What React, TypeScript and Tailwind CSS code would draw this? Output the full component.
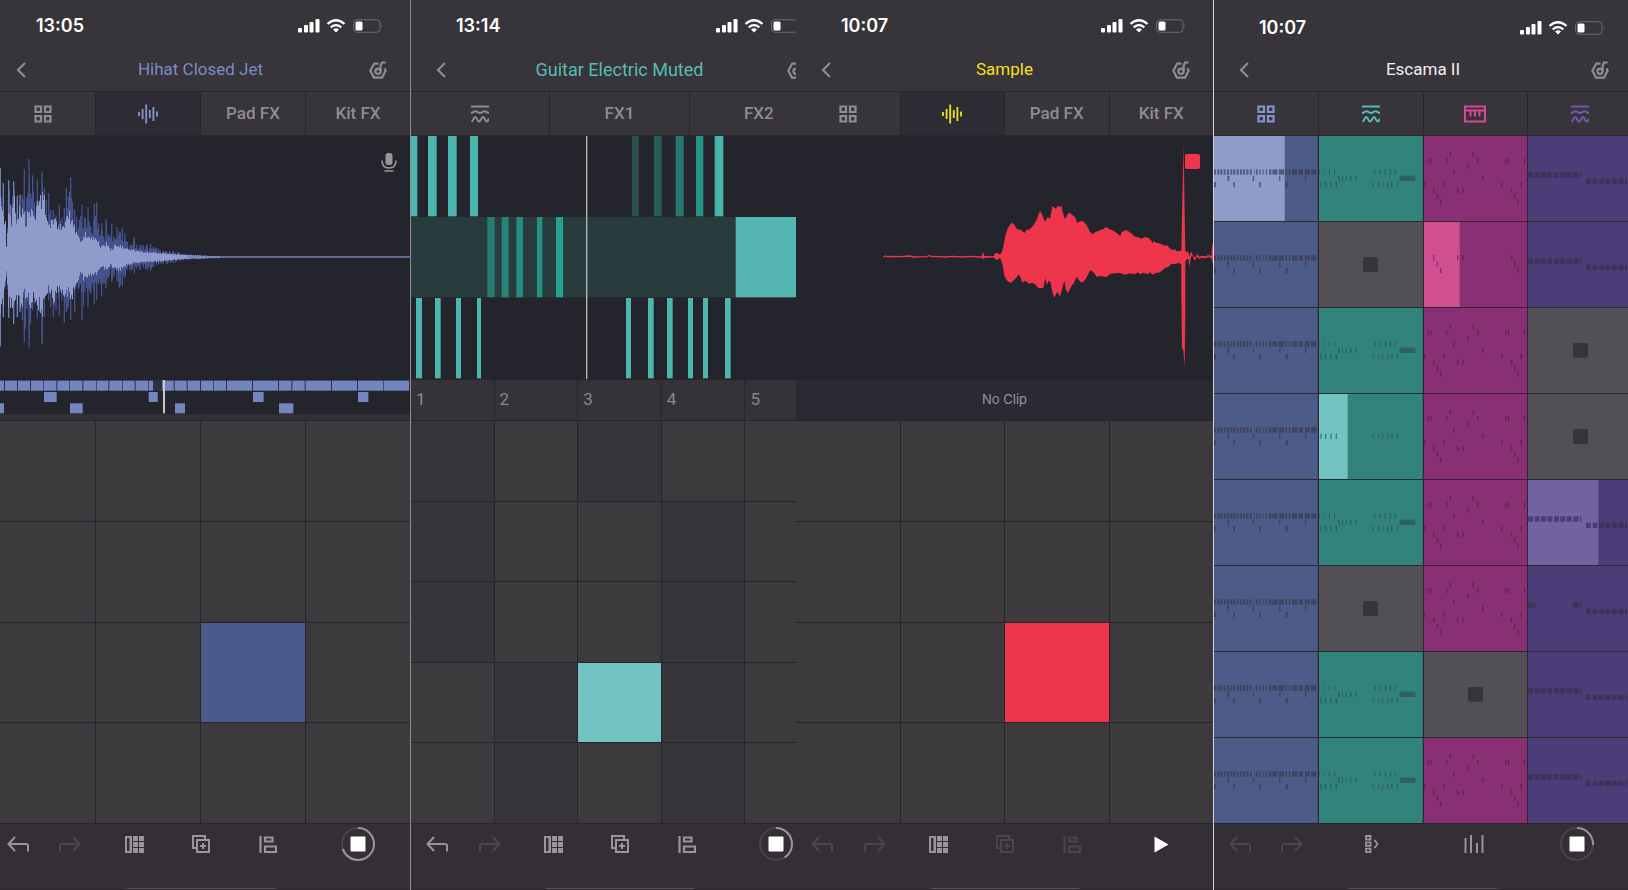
import type { ReactNode } from "react";
import clsx from "clsx";

type Bar = [start: number, end: number];

// ---------------------------------------------------------------- icons

const ICON = "fill-none stroke-current";

function BackIcon() {
  return (
    <svg viewBox="0 0 10 16" className={clsx(ICON, "h-4 w-[10px]")} strokeWidth={2.2}>
      <path d="M9 1 2 8l7 7" />
    </svg>
  );
}

function TunerIcon() {
  return (
    <svg viewBox="0 0 18 18" className={clsx(ICON, "size-[18px]")} strokeWidth={2.2}>
      <path d="M9.5 2.6H5.2L1.4 9.8l3.5 6.8h8.2l3.5-6.8-1-2.4" />
      <circle cx="9" cy="10.3" r="2.6" />
      <path d="M11.6 10.3V4.8L13 1.5h3.6" />
    </svg>
  );
}

function PadsIcon() {
  return (
    <svg viewBox="0 0 18 18" className={clsx(ICON, "size-[18px]")} strokeWidth={2.2}>
      <path d="M1.5 1.5H7V7H1.5zM11 1.5h5.5V7H11zM1.5 11H7v5.5H1.5zM11 11h5.5v5.5H11z" />
    </svg>
  );
}

function WaveIcon() {
  return (
    <svg viewBox="0 0 20 20" className={clsx(ICON, "size-5")} strokeWidth={1.8}>
      <path d="M1 8v4M4.6 5v10M8.2 .5v19M11.8 6v8M15.4 3v14M19 7.5v5" />
    </svg>
  );
}

function SynthIcon() {
  return (
    <svg viewBox="0 0 18 18" className={clsx(ICON, "size-[18px]")} strokeWidth={2}>
      <path d="M0 1.5h18" />
      <path d="M0 8C2 8 2.5 6.3 4.5 6.300S7 8 9 8s2.500-1.700 4.500-1.700S16 8 18 8" />
      <path d="M.5 16.500C2.500 16 2.500 12 4.300 12S6 16.500 8 16.500 10.300 12 12 12s2 4.500 3.500 4.500S17 15.500 17.700 13.500" />
    </svg>
  );
}

function KeysIcon() {
  return (
    <svg viewBox="0 0 22 18" className={clsx(ICON, "h-[18px] w-[22px]")} strokeWidth={2}>
      <path d="M1 1.5h20v15H1zM1 5.5h20M6.5 6v5.5M11 6v5.5M15.5 6v5.5" />
    </svg>
  );
}

function UndoIcon({ flip = false }: { flip?: boolean }) {
  return (
    <svg viewBox="0 0 22 16" className={clsx(ICON, "h-4 w-[22px]", flip && "-scale-x-100")} strokeWidth={2}>
      <path d="M8 1 1.5 8 8 15M1.5 8H19q2 0 2 2v5.5" />
    </svg>
  );
}

function KitIcon() {
  return (
    <svg viewBox="0 0 19 17" className="h-[17px] w-[19px] fill-current">
      <path d="M0 0h7v17H0zM2 2v13h2.5V2z" fillRule="evenodd" />
      {[0, 6, 12].map((y) => (
        <path key={y} d={`M8 ${y}h5v5h-5zM14 ${y}h5v5h-5z`} />
      ))}
    </svg>
  );
}

function DuplicateIcon() {
  return (
    <svg viewBox="0 0 18 18" className={clsx(ICON, "size-[18px]")} strokeWidth={2}>
      <path d="M5 13H1V1h12v4" />
      <path d="M5 5h12v12H5zM11 8v6M8 11h6" />
    </svg>
  );
}

function QuantizeIcon() {
  return (
    <svg viewBox="0 0 18 17" className={clsx(ICON, "h-[17px] w-[18px]")} strokeWidth={2.2}>
      <path d="M1.5 0v17M6 1.5h7.5v4H6zM6 10.5h11V16H6z" />
    </svg>
  );
}

function ScenesIcon() {
  return (
    <svg viewBox="0 0 14 18" className={clsx(ICON, "h-[18px] w-[14px]")} strokeWidth={1.8}>
      <path d="M1 1h4.5v3.5H1zM1 7.3h4.5v3.5H1zM1 13.6h4.5v3.5H1zM9.5 5l3 4-3 4" />
    </svg>
  );
}

function MixerIcon() {
  return (
    <svg viewBox="0 0 20 18" className={clsx(ICON, "h-[18px] w-5")} strokeWidth={2}>
      <path d="M1.5 3v15M7 0v18M13 8v10M18.5 0v18" />
    </svg>
  );
}

function PlayIcon() {
  return (
    <svg viewBox="0 0 15 17" className="h-[17px] w-[15px] fill-current text-white">
      <path d="M.5.5 14.5 8.5.5 16.5z" />
    </svg>
  );
}

function StopIcon({ progress }: { progress: number }) {
  return (
    <svg viewBox="0 0 34 34" className={clsx(ICON, "size-[34px]")} strokeWidth={2}>
      <circle cx="17" cy="17" r="16" className="stroke-[#4d4b50]" strokeWidth={1.5} />
      <circle
        cx="17"
        cy="17"
        r="16"
        pathLength={100}
        strokeDasharray={`${progress} 100`}
        transform="rotate(-90 17 17)"
        className="stroke-[#98969a]"
      />
      <rect x="9.5" y="9.5" width="15" height="15" rx="1" className="fill-white stroke-none" />
    </svg>
  );
}

function MicIcon() {
  return (
    <svg viewBox="0 0 16 19" className={clsx(ICON, "h-[19px] w-4")} strokeWidth={1.6}>
      <rect x="4.5" y="0" width="7" height="12" rx="2.5" className="fill-current stroke-none" />
      <path d="M1 7.5C1 12.5 3.5 15 8 15s7-2.5 7-7.5M3.5 18h9" />
    </svg>
  );
}

function StatusIcons() {
  return (
    <svg viewBox="0 0 86 14" className="h-[14px] w-[86px] fill-white">
      <rect x="0" y="9" width="4" height="4.5" rx="1" />
      <rect x="6" y="6" width="4" height="7.5" rx="1" />
      <rect x="11.5" y="3" width="4" height="10.5" rx="1" />
      <rect x="17.5" y="0" width="4" height="13.5" rx="1" />
      <g className="fill-none stroke-white" strokeWidth={2.3}>
        <path d="M29.5 5Q38-2.5 46.5 5" />
        <path d="M32.7 8.3Q38 4 43.3 8.3" />
      </g>
      <path d="M35 10.5q3-2.5 6 0l-3 3z" />
      <rect x="55.5" y=".75" width="26.5" height="12.5" rx="3.5" className="fill-none stroke-[#6e6c70]" />
      <rect x="57.5" y="2.5" width="7" height="9" rx="1.5" />
      <path d="M83.5 5q1.5 2 0 4z" className="fill-[#6e6c70]" />
    </svg>
  );
}

// ---------------------------------------------------------------- shared chrome

type ScreenProps = {
  time: string;
  title: string;
  titleClass: string;
  className?: string;
  innerClass?: string;
  lowStatus?: boolean;
  tabs: ReactNode;
  toolbar: ReactNode;
  children: ReactNode;
};

function Screen({ time, title, titleClass, className, innerClass, lowStatus, tabs, toolbar, children }: ScreenProps) {
  return (
    <section className={clsx("flex overflow-hidden bg-[#37343a]", className)}>
      <div className={clsx("flex w-full shrink-0 flex-col", innerClass)}>
        <div className={clsx("flex h-[50px] items-center justify-between pr-[26px] pl-[45px]", lowStatus ? "pt-[6px]" : "pt-[2px]")}>
          <span className="text-lg font-semibold text-white">{time}</span>
          <StatusIcons />
        </div>
        <header className="flex h-[41px] items-center justify-between pr-[23px] pb-[2px] pl-[25px] text-[#8f8d90]">
          <button type="button" aria-label="Back" className="w-4">
            <BackIcon />
          </button>
          <h1 className={clsx("font-[Roboto,sans-serif]", titleClass)}>{title}</h1>
          <button type="button" aria-label="Tuning">
            <TunerIcon />
          </button>
        </header>
        <nav className="flex h-[45px] gap-px border-y border-[#28262c] bg-[#28262c]">{tabs}</nav>
        {children}
        <footer className="flex h-[67px] flex-col justify-between border-t border-[#28262c] bg-[#332f35]">
          {toolbar}
          <div className="flex justify-center border-b border-[#33262d]">
            <div className="h-px w-[148px] bg-[#575357]" />
          </div>
        </footer>
      </div>
    </section>
  );
}

type TabProps = { active?: boolean; className?: string; label: string; children?: ReactNode };

function Tab({ active, className, label, children }: TabProps) {
  return (
    <button
      type="button"
      aria-label={label}
      className={clsx(
        "flex flex-1 items-center justify-center font-[Roboto,sans-serif] text-[17px] font-medium",
        active ? "bg-[#2d2b34]" : "bg-[#37343a]",
        className ?? "text-[#8f8d90]",
      )}
    >
      {children ?? label}
    </button>
  );
}

type ToolProps = { label: string; dim?: boolean; children: ReactNode };

function Tool({ label, dim, children }: ToolProps) {
  return (
    <button
      type="button"
      aria-label={label}
      disabled={dim}
      className={clsx("flex items-center justify-center", dim ? "text-[#4a474c]" : "text-[#98969a]")}
    >
      {children}
    </button>
  );
}

type EditToolbarProps = { canUndo?: boolean; canEdit?: boolean; transport: ReactNode };

function EditToolbar({ canUndo = true, canEdit = true, transport }: EditToolbarProps) {
  return (
    <div className="grid h-10 grid-cols-[53fr_52fr_76fr_58fr_76fr_104fr]">
      <Tool label="Undo" dim={!canUndo}>
        <UndoIcon />
      </Tool>
      <Tool label="Redo" dim>
        <UndoIcon flip />
      </Tool>
      <Tool label="Layout">
        <KitIcon />
      </Tool>
      <Tool label="Duplicate" dim={!canEdit}>
        <DuplicateIcon />
      </Tool>
      <Tool label="Quantize" dim={!canEdit}>
        <QuantizeIcon />
      </Tool>
      <Tool label="Transport">{transport}</Tool>
    </div>
  );
}

function PadTabs({ color }: { color: string }) {
  return (
    <>
      <Tab label="Pads">
        <PadsIcon />
      </Tab>
      <Tab label="Sample" active className={color}>
        <WaveIcon />
      </Tab>
      <Tab label="Pad FX" />
      <Tab label="Kit FX" />
    </>
  );
}

function PadGrid({ color }: { color: string }) {
  return (
    <div className="grid min-h-0 flex-1 grid-cols-4 grid-rows-4 gap-px border-t border-[#26252b] bg-[#26252b]">
      {Array.from({ length: 16 }, (_, i) => (
        <button key={i} type="button" aria-label={`Pad ${i + 1}`} className={i === 10 ? color : "bg-[#3c3a3d]"} />
      ))}
    </div>
  );
}

// ---------------------------------------------------------------- drum pad screen

// envelopes as [x, height above the axis, height below the axis], three units to a pixel
const INNER: number[][] = [
  [0, 190, 230], [8, 190, 165], [15, 110, 80], [17, 30, 40], [20, 60, 60], [24, 145, 165], [34, 120, 150], [40, 215, 195],
  [48, 140, 160], [60, 180, 165], [75, 125, 130], [90, 165, 160], [102, 125, 125], [112, 175, 170], [124, 215, 185],
  [134, 180, 160], [145, 120, 120], [160, 140, 155], [170, 115, 130], [180, 120, 125], [190, 115, 150], [199, 150, 120],
  [207, 140, 120], [214, 120, 145], [225, 100, 110], [232, 85, 80], [240, 50, 65], [250, 85, 75], [262, 70, 70],
  [275, 70, 65], [290, 65, 60], [300, 35, 34], [320, 48, 42], [330, 24, 30], [345, 42, 42], [360, 38, 44], [378, 28, 28],
  [400, 24, 22], [430, 18, 18], [470, 14, 15], [500, 12, 12], [540, 8, 8], [600, 5, 5], [640, 3, 4], [700, 2, 2], [1260, 1, 1],
];

const SPIKES: number[][] = [
  [1, 268, 268], [10, 222, 180], [18, 30, 60], [26, 230, 182], [32, 157, 150], [41, 227, 202], [52, 184, 180], [60, 187, 165],
  [67, 187, 190], [73, 264, 255], [80, 177, 155], [87, 294, 272], [92, 190, 180], [98, 245, 160], [105, 132, 130], [112, 232, 185],
  [118, 172, 165], [126, 257, 262], [133, 202, 180], [139, 172, 115], [146, 192, 130], [152, 142, 150], [160, 142, 180],
  [168, 127, 160], [178, 157, 175], [186, 117, 130], [193, 147, 197], [199, 207, 165], [205, 182, 150], [212, 240, 188],
  [218, 144, 110], [224, 142, 165], [230, 120, 90], [246, 157, 190], [254, 120, 105], [264, 150, 150], [272, 92, 110],
  [283, 160, 142], [290, 164, 130], [296, 97, 80], [305, 102, 118], [311, 62, 80], [318, 114, 92], [325, 70, 62],
  [335, 100, 75], [342, 60, 60], [351, 89, 72], [358, 77, 92], [367, 89, 88], [374, 72, 62], [380, 47, 40], [390, 37, 40],
  [403, 60, 50], [410, 37, 35], [420, 37, 40], [430, 35, 32], [440, 37, 40], [452, 39, 42], [460, 30, 30], [470, 27, 25],
  [480, 20, 22], [500, 17, 20], [520, 18, 18], [540, 12, 12], [560, 9, 8], [600, 6, 6], [640, 4, 4],
];

function sampleAt(table: number[][], x: number, col: number) {
  const i = table.findIndex((row) => row[0] >= x);
  if (i < 1) return table[i === 0 ? 0 : table.length - 1][col];
  const a = table[i - 1];
  const b = table[i];
  return a[col] + ((x - a[0]) / (b[0] - a[0])) * (b[col] - a[col]);
}

const jitter = (n: number) => Math.abs(Math.sin(n * 12.9898) * 43758.5453) % 1;

function wavePath(table: number[][], lo: number) {
  let d = "";
  for (let x = 0; x < 660; x += 3) {
    const up = sampleAt(table, x, 1) * (lo + (1 - lo) * jitter(x + 1));
    const down = sampleAt(table, x, 2) * (lo + (1 - lo) * jitter(x + 7));
    d += `M${x} ${(363 - up).toFixed(0)}h3V${(363 + down).toFixed(0)}h-3z`;
  }
  return d;
}

const INNER_PATH = wavePath(INNER, 0.68);
const OUTER_PATH = wavePath(SPIKES, 0.5);

function HihatWave() {
  return (
    <div className="relative h-[244px] bg-[#24252c]">
      <svg viewBox="-27 0 1257 732" preserveAspectRatio="none" className="size-full">
        <path d={OUTER_PATH} fill="#46538a" />
        {SPIKES.map(([x, up, down]) => (
          <path key={x} d={`M${x - 2} ${363 - up}h4V${363 + down}h-4z`} fill={x < 66 ? "#6f80b9" : "#43508a"} />
        ))}
        <path d={INNER_PATH} fill="#8f9bcb" />
        <path d="M560 363H1233" stroke="#7482b8" strokeWidth={4} />
      </svg>
      <div className="absolute top-[17px] right-[13px] text-[#98969a]">
        <MicIcon />
      </div>
    </div>
  );
}

const HIHAT_LANES: Bar[][] = [
  [
    [-27, 12], [15, 51], [54, 90], [93, 130], [132, 169], [172, 208], [210, 247], [250, 288], [290, 325], [328, 366],
    [368, 404], [407, 444], [446, 459], [486, 521], [524, 560], [563, 600], [603, 639], [641, 678], [681, 756],
    [759, 834], [837, 874], [877, 914], [917, 993], [996, 1071], [1074, 1149], [1151, 1227],
  ],
  [[132, 170], [446, 473], [759, 791], [1074, 1105]],
  [[-27, 12], [210, 248], [525, 555], [837, 880]],
];

function HihatClip() {
  return (
    <div className="h-10 border-b-[6px] border-[#332f35] bg-[#24252c]">
      <svg viewBox="-27 0 1257 102" preserveAspectRatio="none" className="size-full">
        <rect x={-27} y={0} width={1260} height={33} fill="#2e2f45" />
        {HIHAT_LANES.map((lane, row) =>
          lane.map(([a, b]) => <rect key={`${row}-${a}`} x={a} y={2 + row * 34} width={b - a} height={30} fill="#7486bf" />),
        )}
        <rect x={489} y={0} width={6} height={100} fill="#c9c7c6" />
      </svg>
    </div>
  );
}

// ---------------------------------------------------------------- guitar screen

type Note = [row: number, start: number, end: number, color: string];

const TEAL = "#4db6ae";

const GUITAR_NOTES: Note[] = [
  [0, 0, 22, TEAL], [0, 54, 80, TEAL], [0, 114, 140, TEAL], [0, 180, 204, TEAL],
  [0, 666, 686, "#2a514e"], [0, 732, 755, "#275b57"], [0, 797, 821, "#28776f"], [0, 858, 880, "#269486"], [0, 914, 940, "#46b3aa"],
  [1, 0, 1260, "#283b3d"], [1, 232, 254, "#277c74"], [1, 275, 296, "#268377"], [1, 319, 339, "#248c80"],
  [1, 381, 397, "#269083"], [1, 438, 459, "#25a194"], [1, 977, 1260, "#55b6b1"],
  [2, 18, 36, TEAL], [2, 75, 92, TEAL], [2, 138, 153, TEAL], [2, 201, 213, TEAL], [2, 648, 663, TEAL], [2, 714, 731, TEAL],
  [2, 771, 788, TEAL], [2, 834, 849, TEAL], [2, 879, 894, TEAL], [2, 945, 962, TEAL],
];

function GuitarRoll() {
  return (
    <div className="h-[244px] bg-[#24252c]">
      <svg viewBox="3 0 1251 732" preserveAspectRatio="none" className="size-full">
        {GUITAR_NOTES.map(([row, a, b, color]) => (
          <rect key={`${row}-${a}`} x={a} y={row * 243} width={b - a} height={241} fill={color} />
        ))}
        <rect x={528} y={0} width={4} height={729} fill="#b9b7b8" />
      </svg>
    </div>
  );
}

// the black keys of a chromatic layout, five semitones to a row from the bottom up
const BLACK_KEYS = [0, 2, 5, 8, 10, 13, 16, 18, 21, 23];

function NoteGrid() {
  return (
    <>
      <div className="grid h-10 grid-cols-5 gap-px bg-[#28272d]">
        {[1, 2, 3, 4, 5].map((n) => (
          <span key={n} className="flex items-center bg-[#353239] pl-[5px] font-[Roboto,sans-serif] text-[17px] text-[#8a888b]">
            {n}
          </span>
        ))}
      </div>
      <div className="grid min-h-0 flex-1 grid-cols-5 grid-rows-5 gap-px border-t border-[#26252b] bg-[#26252b]">
        {Array.from({ length: 25 }, (_, i) => (
          <button
            key={i}
            type="button"
            aria-label={`Note ${i + 1}`}
            className={i === 17 ? "bg-[#70c3c1]" : BLACK_KEYS.includes(i) ? "bg-[#37343a]" : "bg-[#3c3a3d]"}
          />
        ))}
      </div>
    </>
  );
}

// ---------------------------------------------------------------- sample screen

const VOICE_TOP =
  "335,380 338,366 341,372 345,380 371,380 374,371 380,368 387,373 392,372 397,362 402,340 406,316 412,298 420,284 427,278 " +
  "433,284 441,298 452,299 463,309 470,300 480,298 490,286 500,270 506,252 511,243 517,256 525,275 533,261 540,267 547,228 " +
  "557,236 563,229 567,228 570,232 574,226 579,250 585,268 590,258 594,250 601,250 615,262 622,279 630,274 640,274 650,286 " +
  "660,305 667,313 675,307 690,301 700,297 708,290 716,296 730,302 740,309 751,319 755,306 768,300 780,307 795,320 805,322 " +
  "815,326 824,321 836,324 845,334 848,341 851,332 857,338 868,340 885,347 892,346 900,356 910,361 915,357 920,364 934,362 " +
  "936,250 941,45 944,250 946,360 950,368 954,362 958,380 961,370 964,365 970,378 976,383 981,372 988,380 996,377 1006,379 " +
  "1016,375 1024,379 1026,350 1029,335 1040,335";

const VOICE_BOTTOM =
  "1040,405 1028,400 1024,384 1016,381 1006,385 996,383 988,386 981,380 974,392 966,374 962,386 958,410 955,386 950,388 " +
  "946,395 946,550 944,710 940,660 936,655 934,500 934,402 925,399 915,402 905,401 895,411 885,414 870,427 855,430 848,434 " +
  "840,426 835,433 820,428 810,433 804,427 795,433 780,430 765,434 750,429 735,430 720,432 708,442 695,438 680,440 672,428 " +
  "662,420 655,432 645,450 636,458 628,452 620,440 612,458 603,470 594,489 588,480 583,452 578,470 570,500 563,486 558,492 " +
  "553,504 547,485 541,455 536,452 531,464 526,445 520,474 505,474 495,462 485,458 478,461 465,452 457,459 451,440 446,434 " +
  "435,448 422,459 412,453 403,438 399,410 393,388 387,385 380,391 374,385 371,382 345,383 339,388 335,382";

function SampleWave() {
  return (
    <div className="relative h-[244px] bg-[#24252c]">
      <svg viewBox="-222 18 1251 732" preserveAspectRatio="none" className="size-full">
        <path
          d="M40 381l6-3 8 3 8-2 30 1 28-2 10 3 40-1 8-3 8 3 10-1 30 2 20-2 30 2 30-2 20 2 38-1h14"
          className="fill-none stroke-[#ee354b]"
          strokeWidth={4}
        />
        <polygon points={`${VOICE_TOP} ${VOICE_BOTTOM}`} fill="#ee354b" />
      </svg>
      <button
        type="button"
        aria-label="Stop recording"
        className="absolute top-[18px] right-[13px] size-[15px] rounded-[2px] bg-[#ee354b]"
      />
    </div>
  );
}

// ---------------------------------------------------------------- session screen

type Mark = [x: number, y: number, w: number];
type Track = { name: string; base: string; lit: string; note: string; color: string; icon: ReactNode; marks: Mark[] };
type Clip = { marks?: Mark[]; progress?: number } | null;

const row = (y: number, bars: Bar[]): Mark[] => bars.map(([a, b]) => [a, y, b - a]);

const TICKS: Bar[] = Array.from({ length: 12 }, (_, i) => [Math.round(i * 9.7), Math.round(i * 9.7) + 6]);

const DRUM_MARKS: Mark[] = [
  ...row(100, TICKS),
  ...row(100, [
    [120, 122], [126, 131], [136, 140], [146, 149], [155, 159], [165, 172], [175, 190], [194, 210], [214, 219], [224, 229],
    [234, 249], [254, 267], [272, 287], [291, 307],
  ]),
  ...row(119, [[40, 46], [116, 120], [195, 199], [272, 277]]),
  ...row(138, [[0, 6], [58, 63], [136, 141], [214, 221]]),
];

const GUITAR_LOW: Bar[] = [[4, 8], [18, 22], [34, 38], [50, 54], [160, 163], [177, 180], [190, 193], [204, 208], [216, 220], [234, 237]];

const GUITAR_MARKS: Mark[] = [
  ...row(100, [[0, 2], [15, 17], [29, 32], [45, 48], [165, 169], [181, 185], [197, 201], [212, 216], [227, 230]]),
  ...row(119, [[57, 62], [69, 72], [80, 83], [93, 97], [108, 112], [242, 289]]),
  ...row(138, GUITAR_LOW),
];

const dots = (y: number, xs: number[]): Mark[] => xs.map((x) => [x, y, 4]);

const KEYS_MARKS: Mark[] = [
  ...dots(48, [77, 145]),
  ...dots(66, [10, 19, 67, 159, 243, 251, 300]),
  ...dots(83, [131]),
  ...dots(101, [87]),
  ...dots(119, [174]),
  ...dots(138, [0, 58, 231, 289]),
  ...dots(155, [27, 99, 115, 260]),
  ...dots(173, [38, 270]),
  ...dots(190, [48, 280]),
];

const KEYS_SHORT: Mark[] = [...dots(99, [27, 99, 115, 260]), ...dots(118, [38, 270]), ...dots(137, [48, 280])];

const BASS_LOW: Bar[] = [[174, 188], [194, 208], [213, 227], [232, 247], [252, 266], [271, 286], [291, 297]];

const BASS_MARKS: Mark[] = [
  ...row(109, [[0, 15], [20, 35], [39, 54], [58, 73], [78, 93], [97, 112], [116, 131], [136, 151], [155, 160]]),
  ...row(128, BASS_LOW),
];

const BASS_SHORT: Mark[] = [...row(109, [[0, 15], [18, 23], [134, 151], [155, 160]]), ...row(128, BASS_LOW)];

const TRACKS: Track[] = [
  { name: "Drums", base: "#4d5b88", lit: "#8f9cca", note: "#3e4460", color: "text-[#8594d0]", icon: <PadsIcon />, marks: DRUM_MARKS },
  { name: "Guitar", base: "#31837b", lit: "#73c3c2", note: "#2f625d", color: "text-[#55bdb5]", icon: <SynthIcon />, marks: GUITAR_MARKS },
  { name: "Keys", base: "#883073", lit: "#cf4f91", note: "#5c2a57", color: "text-[#d8489a]", icon: <KeysIcon />, marks: KEYS_MARKS },
  { name: "Bass", base: "#4b3e78", lit: "#7063a0", note: "#3b3358", color: "text-[#6f5bb0]", icon: <SynthIcon />, marks: BASS_MARKS },
];

const SCENES: Clip[][] = [
  [{ progress: 212 }, {}, {}, {}],
  [{}, null, { marks: KEYS_SHORT, progress: 107 }, {}],
  [{}, {}, {}, null],
  [{}, { marks: row(119, GUITAR_LOW), progress: 86 }, {}, null],
  [{}, {}, {}, { progress: 211 }],
  [{}, null, {}, { marks: BASS_SHORT }],
  [{}, {}, null, {}],
  [{}, {}, {}, {}],
];

function ClipCell({ clip, track, scene }: { clip: Clip; track: Track; scene: number }) {
  const label = `${track.name} ${scene + 1}`;
  if (!clip) {
    return (
      <button type="button" aria-label={label} className="flex items-center justify-center bg-[#525054]">
        <span className="size-[15px] rounded-[2px] bg-[#37343a]" />
      </button>
    );
  }
  const progress = clip.progress ?? 0;
  return (
    <button type="button" aria-label={label} className="min-h-0">
      <svg viewBox="0 0 311 255" preserveAspectRatio="none" className="block size-full">
        <rect width={311} height={255} fill={track.base} />
        <rect width={progress} height={255} fill={track.lit} />
        {(clip.marks ?? track.marks).map(([x, y, w]) => (
          <rect key={`${x}-${y}`} x={x} y={y} width={w} height={16} fill={x < progress ? track.base : track.note} />
        ))}
      </svg>
    </button>
  );
}

function SessionGrid() {
  return (
    <div className="grid min-h-0 flex-1 grid-cols-4 grid-rows-8 gap-px bg-[#2b2832]">
      {SCENES.map((clips, scene) =>
        clips.map((clip, i) => <ClipCell key={`${scene}-${i}`} clip={clip} track={TRACKS[i]} scene={scene} />),
      )}
    </div>
  );
}

function SessionToolbar() {
  return (
    <div className="grid h-10 grid-cols-[52fr_52fr_108fr_96fr_110fr]">
      <Tool label="Undo" dim>
        <UndoIcon />
      </Tool>
      <Tool label="Redo" dim>
        <UndoIcon flip />
      </Tool>
      <Tool label="Scenes">
        <ScenesIcon />
      </Tool>
      <Tool label="Mixer">
        <MixerIcon />
      </Tool>
      <Tool label="Stop">
        <StopIcon progress={26} />
      </Tool>
    </div>
  );
}

// ---------------------------------------------------------------- page

export default function App() {
  return (
    <main className="grid h-screen min-h-[640px] grid-cols-[410fr_386fr_417fr_415fr] grid-rows-1 bg-[#37343a] font-[Inter,sans-serif]">
      <Screen
        time="13:05"
        title="Hihat Closed Jet"
        titleClass="text-[17px] text-[#7a8cc8]"
        className="justify-end"
        innerClass="min-w-[419px]"
        tabs={<PadTabs color="text-[#8594d0]" />}
        toolbar={<EditToolbar transport={<StopIcon progress={70} />} />}
      >
        <HihatWave />
        <HihatClip />
        <PadGrid color="bg-[#4a5a8b]" />
      </Screen>

      <Screen
        time="13:14"
        title="Guitar Electric Muted"
        titleClass="text-lg text-[#55bdb5]"
        className="border-l border-[#8e8c8f]"
        innerClass="min-w-[417px]"
        tabs={
          <>
            <Tab label="Synth">
              <SynthIcon />
            </Tab>
            <Tab label="FX1" />
            <Tab label="FX2" />
          </>
        }
        toolbar={<EditToolbar transport={<StopIcon progress={41} />} />}
      >
        <GuitarRoll />
        <NoteGrid />
      </Screen>

      <Screen
        time="10:07"
        title="Sample"
        titleClass="text-[17px] text-[#f5e01e]"
        tabs={<PadTabs color="text-[#f5e01e]" />}
        toolbar={<EditToolbar canUndo={false} canEdit={false} transport={<PlayIcon />} />}
      >
        <SampleWave />
        <p className="flex h-10 items-center justify-center bg-[#2b2932] text-[13px] text-[#98969a]">No Clip</p>
        <PadGrid color="bg-[#ee354b]" />
      </Screen>

      <Screen
        time="10:07"
        title="Escama II"
        titleClass="text-[17px] text-[#f2f0f2]"
        className="border-l border-[#d5d3d5]"
        innerClass="min-w-[418px]"
        lowStatus
        tabs={TRACKS.map((track) => (
          <Tab key={track.name} label={track.name} className={track.color}>
            {track.icon}
          </Tab>
        ))}
        toolbar={<SessionToolbar />}
      >
        <SessionGrid />
      </Screen>
    </main>
  );
}
